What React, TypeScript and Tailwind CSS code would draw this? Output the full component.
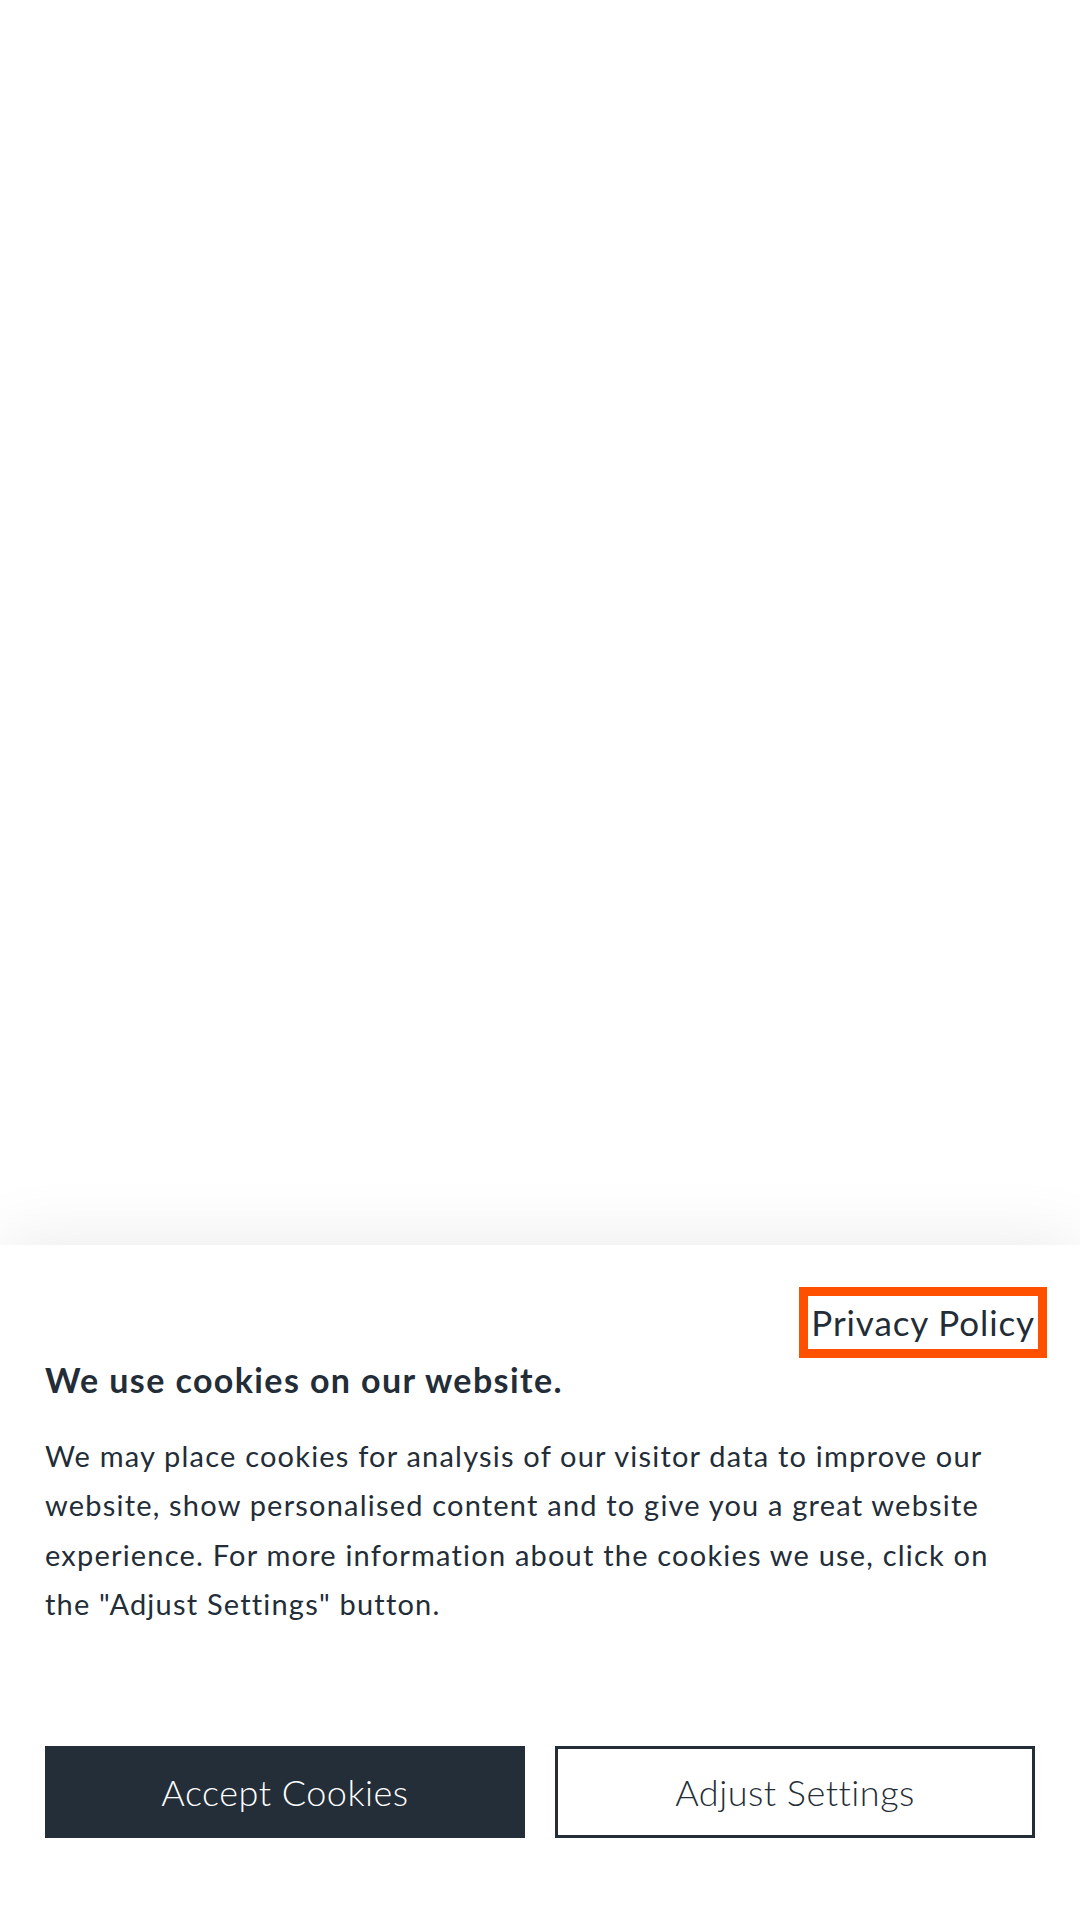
import { FC } from "react";

const CookieBanner: FC = () => {
  return (
    <div className="bg-white pt-[42px] px-[45px] pb-[82px] shadow-[0_0_70px_rgba(0,0,0,0.09)]">
      <div className="flex justify-end -mr-3">
        <a
          href="#"
          className="inline-block border-[9px] border-[#ff5000] px-[3px] h-[71px] leading-[53px] text-[35px] tracking-[0.9px] text-[#232d38]"
        >
          Privacy Policy
        </a>
      </div>
      <h2 className="mt-[2px] text-[34px] leading-[40px] font-bold tracking-[1.4px] text-[#232d38]">
        We use cookies on our website.
      </h2>
      <p className="mt-[31px] text-[29px] leading-[49.6px] tracking-[1.2px] text-[#232d38]">
        We may place cookies for analysis of our visitor data to improve our
        <br />
        website, show personalised content and to give you a great website
        <br />
        experience. For more information about the cookies we use, click on
        <br />
        the "Adjust Settings" button.
      </p>
      <div className="mt-[117px] grid grid-cols-2 gap-[30px]">
        <button className="h-[92px] bg-[#242e39] text-white text-[36px] tracking-[0.5px] font-light">
          Accept Cookies
        </button>
        <button className="h-[92px] border-[3px] border-[#242e39] bg-white text-[#242e39] text-[36px] tracking-[0.5px] font-light">
          Adjust Settings
        </button>
      </div>
    </div>
  );
};

const App: FC = () => {
  return (
    <div className="w-full h-[1920px] bg-white flex flex-col justify-end overflow-hidden font-['Lato',sans-serif]">
      <CookieBanner />
    </div>
  );
};

export default App;
